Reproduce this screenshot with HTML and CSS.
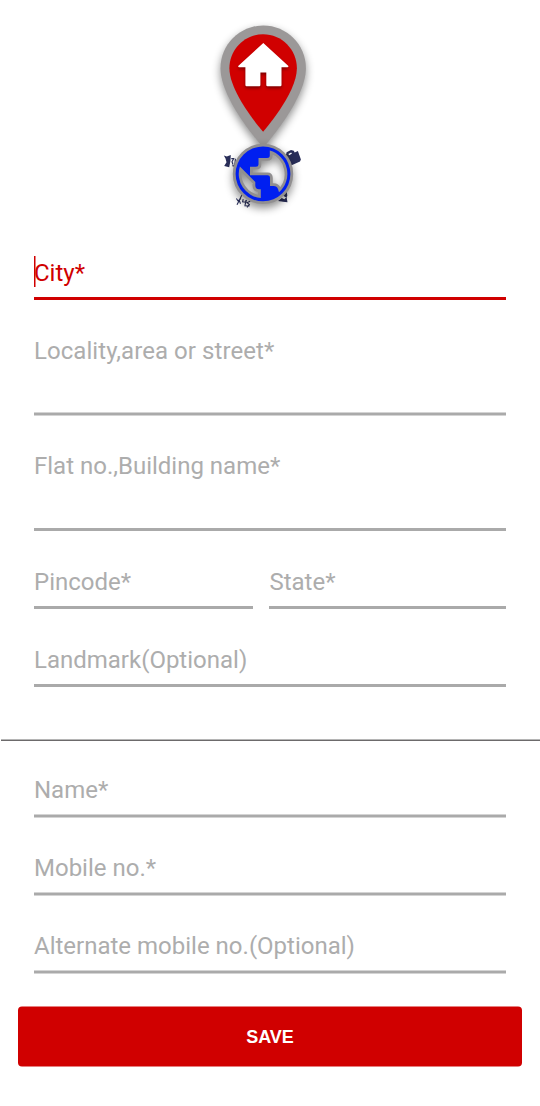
FILE: index.html
```html
<!DOCTYPE html>
<html lang="en">
<head>
<meta charset="utf-8">
<title>Add address</title>
<link rel="stylesheet" href="styles.css">
</head>
<body>
<main class="page">
  <svg class="hero" viewBox="205 0 120 222" aria-hidden="true">
    <g class="shadow">
      <path fill="#9b9898" transform="translate(190 13.3) scale(6.1)" d="M12 2C8.13 2 5 5.13 5 9c0 5.25 7 13 7 13s7-7.75 7-13c0-3.87-3.13-7-7-7z"/>
    </g>
    <path fill="#d00000" transform="translate(205.3 24.5) scale(4.82 4.87)" d="M12 2C8.13 2 5 5.13 5 9c0 5.25 7 13 7 13s7-7.75 7-13c0-3.87-3.13-7-7-7z"/>
    <path class="house" fill="#fff" d="M263.3 43L238.2 66q-.2 1.2 1 1.2H245.4V85q0 1.2 1.2 1.2H259.2q1.2 0 1.2-1.2V72.4H266.3V85q0 1.2 1.2 1.2H280.3q1.2 0 1.2-1.2V67.2H287.4q1.2 0 1-1.2z"/>
    <g fill="#292e59">
      <path d="M223.8 155.5l3 .9 4-1.4-.4 6-1.2 6.3-5-1.4 2.3-3.6-1-3.8z"/>
      <path fill-rule="evenodd" d="M285.6 156.6l1-4.3 4.4-2.2 2.8.7.9 1.7 3.2-1.4 3 8.4-.9 2-8.4 3.8-2.2-1.1-1.6-5.2-1.2-.2zM288.3 154l2.8-1.6.9 1-2.7 1.8z"/>
      <path d="M278 201l3.8-3.1 2.5 1.3 1.8-1.6-3.2-2 3.8-4.8.6 5-.7 1.5.9 4.9-4.5-.5-1.3-.2z"/>
    </g>
    <g class="scribble">
      <path d="M231.3 158.6l2.4-.1-1.7 3.3 1 2.8M235.4 158.8l-.7 7.5M232.4 165.6l3 .8"/>
      <path d="M242.2 194.3l-3 6.2-2.2 4.2M236.4 198.5l1.5 2.2 3.2-2.1M239.3 200.5l1.2 3.2M243.2 199.2l-.6 2.6 3 .4.4-2.2M246.5 199.8l-1.5 5.2M250.3 201.3l-3.2 1.3 2.3 2-2.4 2.8M244.3 205.7l5.2.3"/>
    </g>
    <g class="shadow">
      <path fill="#918f90" stroke="#918f90" stroke-width="5.6" stroke-linejoin="round" fill-rule="evenodd" d="M263 146.5a27.4 27.4 0 1 0 0 54.8a27.4 27.4 0 1 0 0-54.8zM269.8 150.6V155.5Q269.8 158 267 158H258.5V164.5Q258.5 166.8 256 166.8H250V175.2H267.5Q270 175.2 270 178V186H273.5Q277 186 278 189L279 192.3A24.3 24.3 0 0 0 269.8 150.6zM239.9 166.5L255.3 181.9V185.5Q255.3 189 259 189.3H260.8V198.1A24.3 24.3 0 0 1 239.9 166.5z"/>
    </g>
    <path fill="#001ff0" fill-rule="evenodd" d="M263 146.5a27.4 27.4 0 1 0 0 54.8a27.4 27.4 0 1 0 0-54.8zM269.8 150.6V155.5Q269.8 158 267 158H258.5V164.5Q258.5 166.8 256 166.8H250V175.2H267.5Q270 175.2 270 178V186H273.5Q277 186 278 189L279 192.3A24.3 24.3 0 0 0 269.8 150.6zM239.9 166.5L255.3 181.9V185.5Q255.3 189 259 189.3H260.8V198.1A24.3 24.3 0 0 1 239.9 166.5z"/>
  </svg>

  <section class="group">
    <div class="field active"><span class="label">City*</span></div>
    <div class="field tall soft"><span class="label">Locality,area or street*</span></div>
    <div class="field area"><span class="label">Flat no.,Building name*</span></div>
    <div class="pair">
      <div class="field"><span class="label">Pincode*</span></div>
      <div class="field"><span class="label">State*</span></div>
    </div>
    <div class="field"><span class="label">Landmark(Optional)</span></div>
  </section>

  <div class="divider"></div>

  <section class="group">
    <div class="field soft"><span class="label">Name*</span></div>
    <div class="field soft"><span class="label">Mobile no.*</span></div>
    <div class="field soft"><span class="label">Alternate mobile no.(Optional)</span></div>
  </section>

  <button class="save" type="button">SAVE</button>
</main>
</body>
</html>
```
FILE: styles.css
```css
* { box-sizing: border-box; }

body {
  margin: 0;
  background: #fff;
  font-family: Roboto, sans-serif;
}

.page {
  width: 540px;
  height: 1106px;
  display: flex;
  flex-direction: column;
  overflow: hidden;
}

.hero {
  display: block;
  width: 120px;
  height: 222px;
  margin-left: 205px;
  flex: none;
}

.shadow { filter: drop-shadow(0 4px 4px rgba(0, 0, 0, 0.45)); }
.house { filter: drop-shadow(0 2px 1.5px rgba(0, 0, 0, 0.4)); }

.scribble {
  fill: none;
  stroke: #292e59;
  stroke-width: 1.1;
}

.group {
  display: flex;
  flex-direction: column;
  padding: 0 34px;
}

.field {
  height: 78px;
  flex: none;
  display: flex;
  flex-direction: column;
  justify-content: space-between;
  padding-top: 37px;
  color: #adadad;
}

.field::after {
  content: "";
  height: 3px;
  background: #aaa;
}

.tall { height: 115px; }
.tall .label { letter-spacing: 0.06px; }
.area { height: 116px; }
.soft::after { transform: translateY(0.5px); }

.label {
  font-size: 24px;
  line-height: 28px;
  white-space: nowrap;
}

.active { color: #d00000; }
.active::after { background: #d00000; }

.active .label {
  height: 31px;
  margin-top: -3px;
  padding-top: 3px;
  background: linear-gradient(#d00000, #d00000) 0 0 / 1.5px 31px no-repeat;
}

.pair {
  display: grid;
  grid-template-columns: 219.4px 236.6px;
  column-gap: 16px;
}

.divider {
  height: 2px;
  margin: 52px 0 -2px 1px;
  background: linear-gradient(#b5b5b5 50%, #6c6a6b 50%);
}

.save {
  width: 504px;
  height: 60px;
  flex: none;
  margin: 33px 18px 0;
  padding: 0;
  border: 0;
  border-radius: 4px;
  background: #d00000;
  color: #fff;
  font: bold 18px/60px "Liberation Sans", Arial, sans-serif;
  transform: translateY(0.5px);
}
```
